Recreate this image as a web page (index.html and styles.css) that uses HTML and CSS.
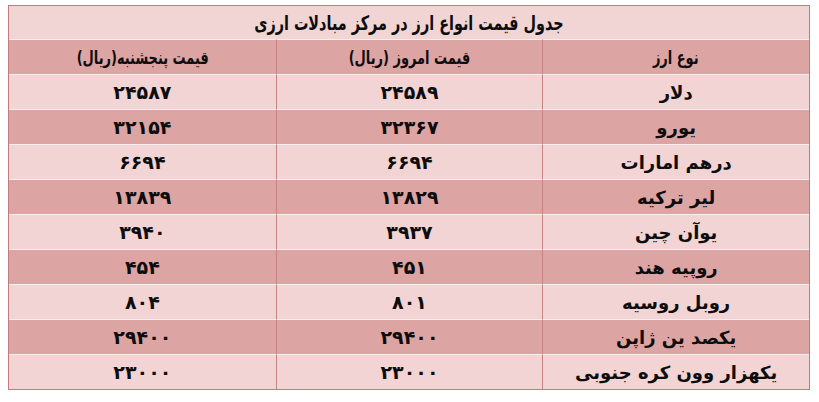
FILE: index.html
```html
<!DOCTYPE html>
<html lang="fa" dir="rtl">
<head>
<meta charset="utf-8">
<link rel="stylesheet" href="styles.css">
</head>
<body>
<div class="wrap">
<table class="rates">
<tr class="title"><td colspan="3"><span class="narrow">جدول قیمت انواع ارز در مرکز مبادلات ارزی</span></td></tr>
<tr class="head dark"><td><span class="narrow">نوع ارز</span></td><td><span class="narrow">قیمت امروز (ریال)</span></td><td><span class="narrow">قیمت پنجشنبه(ریال)</span></td></tr>
<tr class="light"><td>دلار</td><td class="num">۲۴۵۸۹</td><td class="num">۲۴۵۸۷</td></tr>
<tr class="dark"><td>یورو</td><td class="num">۳۲۳۶۷</td><td class="num">۳۲۱۵۴</td></tr>
<tr class="light"><td>درهم امارات</td><td class="num">۶۶۹۴</td><td class="num">۶۶۹۴</td></tr>
<tr class="dark"><td>لیر ترکیه</td><td class="num">۱۳۸۲۹</td><td class="num">۱۳۸۳۹</td></tr>
<tr class="light"><td>یوآن چین</td><td class="num">۳۹۳۷</td><td class="num">۳۹۴۰</td></tr>
<tr class="dark"><td>روپیه هند</td><td class="num">۴۵۱</td><td class="num">۴۵۴</td></tr>
<tr class="light"><td>روبل روسیه</td><td class="num">۸۰۱</td><td class="num">۸۰۴</td></tr>
<tr class="dark"><td>یکصد ین ژاپن</td><td class="num">۲۹۴۰۰</td><td class="num">۲۹۴۰۰</td></tr>
<tr class="light"><td>یکهزار وون کره جنوبی</td><td class="num">۲۳۰۰۰</td><td class="num">۲۳۰۰۰</td></tr>
</table>
</div>
</body>
</html>
```
FILE: styles.css
```css
html, body {
  margin: 0;
  padding: 0;
  background: #ffffff;
}
.wrap {
  padding: 5px 9px 0 8px;
}
.rates {
  width: 802px;
  border-collapse: separate;
  border-spacing: 0;
  border: 1px solid #c27a7a;
  font-family: "DejaVu Sans", sans-serif;
  font-weight: bold;
  font-size: 18px;
  color: #0d0d0d;
  table-layout: fixed;
}
.rates td {
  height: 34px;
  padding: 0;
  text-align: center;
  vertical-align: middle;
  border-top: 1px solid #fbeeee;
}
.rates td:not(:last-child) {
  border-left: 1px solid #c48282;
}
.rates td.num {
  font-size: 19px;
}
.narrow {
  display: inline-block;
  transform: scaleX(0.72);
}
.rates tr.head td {
  font-size: 18px;
}
.rates tr.title td {
  border-top: none;
  background: #f1d5d5;
  font-size: 20px;
  height: 33px;
}
.rates tr.light td {
  background: #f2d4d4;
}
.rates tr.dark td {
  background: #dda4a4;
}
```
